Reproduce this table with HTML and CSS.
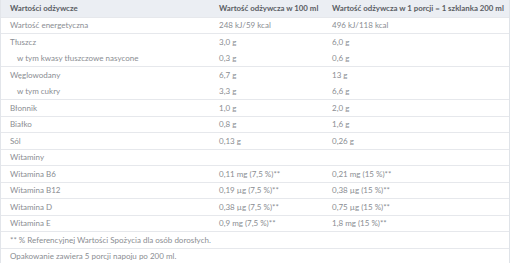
FILE: index.html
```html
<!DOCTYPE html>
<html lang="pl">
<head>
<meta charset="utf-8">
<link rel="stylesheet" href="styles.css">
</head>
<body>
<div class="table">
  <div class="row head">
    <div class="cell">Wartości odżywcze</div>
    <div class="cell">Wartość odżywcza w 100 ml</div>
    <div class="cell">Wartość odżywcza w 1 porcji = 1 szklanka 200 ml</div>
  </div>
  <div class="row sep">
    <div class="cell">Wartość energetyczna</div>
    <div class="cell">248 kJ/59 kcal</div>
    <div class="cell">496 kJ/118 kcal</div>
  </div>
  <div class="row sep">
    <div class="cell">Tłuszcz</div>
    <div class="cell">3,0 g</div>
    <div class="cell">6,0 g</div>
  </div>
  <div class="row">
    <div class="cell sub">w tym kwasy tłuszczowe nasycone</div>
    <div class="cell">0,3 g</div>
    <div class="cell">0,6 g</div>
  </div>
  <div class="row sep">
    <div class="cell">Węglowodany</div>
    <div class="cell">6,7 g</div>
    <div class="cell">13 g</div>
  </div>
  <div class="row">
    <div class="cell sub">w tym cukry</div>
    <div class="cell">3,3 g</div>
    <div class="cell">6,6 g</div>
  </div>
  <div class="row sep">
    <div class="cell">Błonnik</div>
    <div class="cell">1,0 g</div>
    <div class="cell">2,0 g</div>
  </div>
  <div class="row sep">
    <div class="cell">Białko</div>
    <div class="cell">0,8 g</div>
    <div class="cell">1,6 g</div>
  </div>
  <div class="row sep">
    <div class="cell">Sól</div>
    <div class="cell">0,13 g</div>
    <div class="cell">0,26 g</div>
  </div>
  <div class="row sep">
    <div class="cell">Witaminy</div>
    <div class="cell"></div>
    <div class="cell"></div>
  </div>
  <div class="row sep">
    <div class="cell">Witamina B6</div>
    <div class="cell">0,11 mg (7,5 %)**</div>
    <div class="cell">0,21 mg (15 %)**</div>
  </div>
  <div class="row sep">
    <div class="cell">Witamina B12</div>
    <div class="cell">0,19 µg (7,5 %)**</div>
    <div class="cell">0,38 µg (15 %)**</div>
  </div>
  <div class="row sep">
    <div class="cell">Witamina D</div>
    <div class="cell">0,38 µg (7,5 %)**</div>
    <div class="cell">0,75 µg (15 %)**</div>
  </div>
  <div class="row sep">
    <div class="cell">Witamina E</div>
    <div class="cell">0,9 mg (7,5 %)**</div>
    <div class="cell">1,8 mg (15 %)**</div>
  </div>
  <div class="row sep full">
    <div class="cell">** % Referencyjnej Wartości Spożycia dla osób dorosłych.</div>
  </div>
  <div class="row sep full last">
    <div class="cell">Opakowanie zawiera 5 porcji napoju po 200 ml.</div>
  </div>
</div>
</body>
</html>
```

FILE: styles.css
```css
html, body {
  margin: 0;
  padding: 0;
  background: #ffffff;
}

.table {
  width: 510px;
  box-sizing: border-box;
  border-left: 1px solid #e2e5ea;
  border-right: 1px solid #dfe3e8;
  font-family: Lato, "Noto Sans", sans-serif;
  font-size: 8px;
  color: #8a8d92;
}

.row {
  display: grid;
  grid-template-columns: 209px 113px 1fr;
  height: 16.5px;
  box-sizing: border-box;
  align-items: center;
}

.row.sep {
  border-top: 1px solid #e6e8ec;
}

.row.last {
  border-bottom: 1px solid #dfe3e8;
}

.row.full {
  grid-template-columns: 1fr;
}

.head {
  background: #ebeef3;
  color: #5a5d63;
  font-weight: 700;
  font-size: 7.85px;
}

.cell {
  padding-left: 9px;
  white-space: nowrap;
}

.cell.sub {
  padding-left: 16px;
}
```
